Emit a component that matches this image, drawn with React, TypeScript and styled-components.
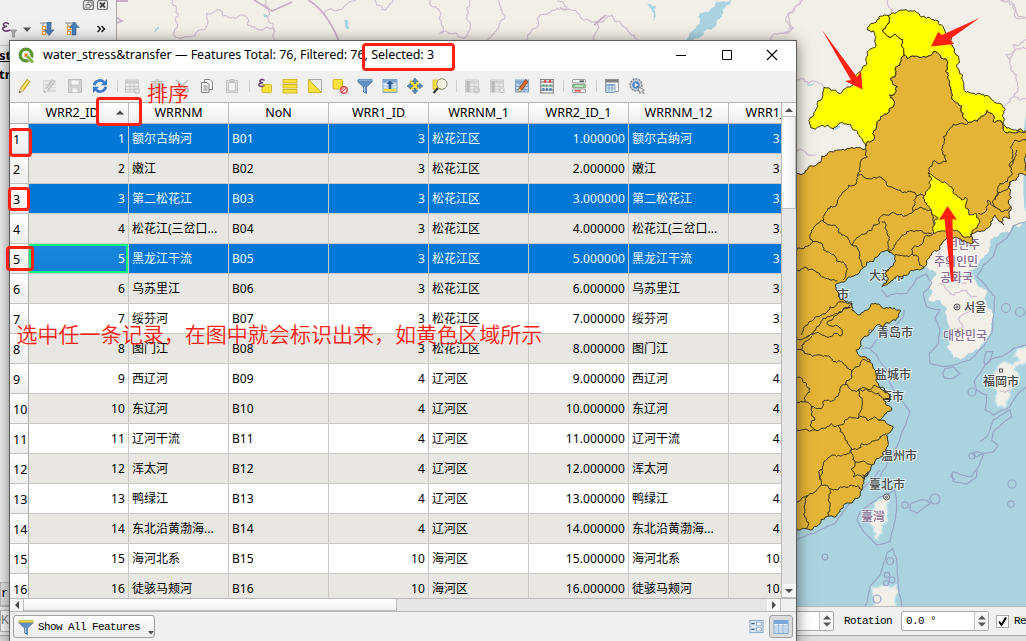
import React from "react";
import styled, { createGlobalStyle, css } from "styled-components";

const ui = `"Noto Sans", "Noto Sans CJK SC", sans-serif`;
const mono = `"Liberation Mono", monospace`;

const Global = createGlobalStyle`
  body { margin: 0; background: #f0f0f0; overflow: hidden; }
  * { box-sizing: border-box; }
`;

const Desktop = styled.div`
  position: relative;
  width: 1026px;
  height: 641px;
  overflow: hidden;
  display: flex;
  flex-direction: column;
  background: #f0f0f0;
  color: #000;
  font: 12px/16px ${ui};
`;

/* ---------- main window behind ---------- */

const MainRow = styled.div`
  display: flex;
  height: 606px;
  flex: none;
`;

const LayersPanel = styled.div`
  width: 117px;
  flex: none;
  display: flex;
  flex-direction: column;
  justify-content: space-between;
  border-right: 1px solid #a5a5a5;
`;

const PanelTools = styled.div`
  height: 46px;
  border-bottom: 1px solid #c9c9c9;
  svg { display: block; }
`;

const LayerName = styled.div<{ $active?: boolean }>`
  font: bold 13px/19px ${ui};
  margin-left: -1px;
  text-decoration: ${(p) => (p.$active ? "underline" : "none")};
`;

const PanelFoot = styled.div`
  height: 24px;
  border: 1px solid #bcbcbc;
  background: #e4e4e4;
  font: 12px/22px ${mono};
`;

const MainStatus = styled.div`
  height: 30px;
  flex: none;
  display: flex;
  align-items: center;
  justify-content: space-between;
  border-top: 1px solid #b8b8b8;
  border-bottom: 1px solid #a9a9a9;
  font: 11px/16px ${mono};
  letter-spacing: -0.6px;
`;

const StatusGroup = styled.div`
  display: flex;
  align-items: center;
`;

const Under = styled.div`
  flex: 1;
  background: #dedede;
`;

const Locator = styled.div`
  width: 100px;
  height: 22px;
  border: 1px solid #b5b5b5;
  background: #fff;
  color: #888;
  font: 13px/20px ${mono};
`;

const Spin = styled.div<{ $w: number }>`
  width: ${(p) => p.$w}px;
  height: 20px;
  display: flex;
  justify-content: space-between;
  border: 1px solid #a8a8a8;
  border-radius: 2px;
  background: #fff;
  padding-left: 4px;
  line-height: 18px;
`;

const SpinButtons = styled.div`
  width: 14px;
  border-left: 1px solid #c4c4c4;
  background: #f6f6f6;
  svg { display: block; margin: 3px auto; }
`;

const StatusLabel = styled.span<{ $w: number; $gap: number }>`
  padding-left: ${(p) => p.$gap}px;
  width: ${(p) => p.$w}px;
`;

const Check = styled.div`
  width: 13px;
  height: 13px;
  margin-left: 7px;
  border: 1px solid #a8a8a8;
  background: #fff;
  svg { display: block; }
`;

/* ---------- attribute table window ---------- */

const Win = styled.div`
  position: absolute;
  left: 9px;
  top: 40px;
  width: 788px;
  height: 605px;
  display: flex;
  flex-direction: column;
  background: #f0f0f0;
  border: 1px solid #5c5c5c;
  box-shadow: 0 2px 14px rgba(0, 0, 0, 0.5);
`;

const TitleBar = styled.div`
  height: 30px;
  flex: none;
  display: flex;
  align-items: center;
  background: #fff;
  padding: 0 1px 2px 8px;
`;

const Title = styled.div`
  flex: 1;
  padding-left: 8px;
  white-space: nowrap;
  font: 12.5px/18px ${ui};
  letter-spacing: -0.03px;
`;

const WinButton = styled.div`
  width: 45.5px;
  display: flex;
  justify-content: center;
`;

const Toolbar = styled.div`
  height: 31px;
  flex: none;
  display: flex;
  align-items: center;
  padding: 0 0 2px 2.6px;
`;

const Tool = styled.div<{ $dim?: boolean }>`
  width: 25px;
  display: flex;
  justify-content: center;
  opacity: ${(p) => (p.$dim ? 0.4 : 1)};
  filter: ${(p) => (p.$dim ? "grayscale(1)" : "none")};
  svg { display: block; }
`;

const Sep = styled.div`
  width: 7.3px;
  height: 12px;
  border-left: 1px solid #cfcfcf;
  margin-left: 4px;
  margin-right: -4px;
`;

const TableArea = styled.div`
  display: flex;
  height: 496px;
  flex: none;
  border-top: 1px solid #b4b4b4;
`;

const Grid = styled.div`
  width: 771px;
  overflow: hidden;
  background: #fff;
`;

const Row = styled.div`
  display: flex;
  width: 900px;
`;

const RowHead = styled.div`
  width: 19px;
  height: 30px;
  flex: none;
  padding: 1px 0 0 3px;
  line-height: 29px;
  font-size: 12.5px;
  background: linear-gradient(#fff, #ededed);
  border-right: 1px solid #adadad;
  border-bottom: 1px solid #c4c4c4;
`;

const ColHead = styled.div<{ $w: number; $sorted?: boolean }>`
  position: relative;
  width: ${(p) => p.$w}px;
  height: 21px;
  flex: none;
  padding-right: ${(p) => (p.$sorted ? 13 : 0)}px;
  text-align: center;
  font-size: 12.5px;
  line-height: 20px;
  background: linear-gradient(#fff, #ededed);
  border-right: 1px solid #bdbdbd;
  border-bottom: 1px solid #b4b4b4;
`;

const SortMark = styled.svg`
  position: absolute;
  right: 4px;
  top: 7px;
`;

const Cell = styled.div<{ $sel: boolean; $odd: boolean; $num: boolean; $cur: boolean }>`
  width: 100px;
  height: 30px;
  flex: none;
  padding: 0 3px;
  white-space: nowrap;
  overflow: hidden;
  line-height: 29px;
  letter-spacing: ${(p) => (p.$num ? "0.12px" : "0")};
  text-align: ${(p) => (p.$num ? "right" : "left")};
  border-right: 1px solid #c8c8c8;
  border-bottom: 1px solid #c8c8c8;
  background: ${(p) => (p.$sel ? "#0078d7" : p.$odd ? "#e9e7e3" : "#fff")};
  color: ${(p) => (p.$sel ? "#f2f8ff" : "#000")};
  ${(p) =>
    p.$cur &&
    css`
      background: linear-gradient(#1b86dd, #127fd6);
      box-shadow: inset 0 0 0 2px #06f57f;
    `}
`;

const VScroll = styled.div`
  width: 15px;
  display: flex;
  flex-direction: column;
  background: #e6e6e6;
  border-left: 1px solid #b8b8b8;
`;

const HScroll = styled.div`
  height: 14px;
  flex: none;
  display: flex;
  background: #e6e6e6;
  border-top: 1px solid #b8b8b8;
  border-bottom: 1px solid #b8b8b8;
`;

const ScrollButton = styled.div<{ $vertical?: boolean }>`
  width: 14px;
  height: ${(p) => (p.$vertical ? "14px" : "12px")};
  flex: none;
  display: flex;
  align-items: center;
  justify-content: center;
  background: #f7f7f7;
  border: solid #bdbdbd;
  border-width: ${(p) => (p.$vertical ? "0 0 1px" : "0 1px 0 0")};
`;

const Thumb = styled.div<{ $w: string; $h: string; $dir: string }>`
  width: ${(p) => p.$w};
  height: ${(p) => p.$h};
  background: linear-gradient(${(p) => p.$dir}, #fff, #efefef);
  border: solid #bdbdbd;
  border-width: 0 1px 1px 0;
`;

const Fill = styled.div`
  flex: 1;
`;

const Corner = styled.div`
  width: 15px;
  background: #f0f0f0;
`;

const Footer = styled.div`
  flex: none;
  height: 32px;
  display: flex;
  justify-content: space-between;
  padding: 3px 3px 0;
`;

const FilterButton = styled.div`
  width: 142px;
  height: 23px;
  display: flex;
  align-items: center;
  border: 1px solid #a0a0a0;
  border-radius: 3px;
  background: linear-gradient(#fff, #ececec);
  padding-left: 4px;
  gap: 4px;
  font: 11px/16px ${mono};
  letter-spacing: -0.6px;
  white-space: nowrap;
  svg { flex: none; }
  svg:last-child { margin: 12px 0 0 4px; }
`;

const Views = styled.div`
  display: flex;
  align-items: center;
  height: 23px;
  gap: 5px;
`;

const ActiveView = styled.div`
  width: 24px;
  height: 23px;
  display: flex;
  align-items: center;
  justify-content: center;
  border: 1px solid #a0a0a0;
  border-radius: 3px;
  background: #dcdcdc;
`;

/* ---------- annotations over the windows ---------- */

const Mark = styled.div<{ $x: number; $y: number; $w: number; $h: number }>`
  position: absolute;
  left: ${(p) => p.$x}px;
  top: ${(p) => p.$y}px;
  width: ${(p) => p.$w}px;
  height: ${(p) => p.$h}px;
  border: 3px solid #ff2010;
  border-radius: 4px;
`;

const Note = styled.div<{ $x: number; $y: number }>`
  position: absolute;
  left: ${(p) => p.$x}px;
  top: ${(p) => p.$y}px;
  color: #f8200f;
  font: 350 21px/28px "Noto Sans CJK SC", sans-serif;
  letter-spacing: 0.03px;
  white-space: nowrap;
`;

const Arrows = styled.svg`
  position: absolute;
  left: 0;
  top: 0;
`;

/* ---------- map ---------- */

type P = [number, number];

const sheet = (ox: number, oy: number, flat: string): P[] =>
  flat.split(" ").map((s) => {
    const [a, b] = s.split(",").map(Number);
    return [ox + a / 3, oy + b / 3] as P;
  });

/* Repeatable midpoint displacement: shared borders give the same line both ways. */
const split = (a: P, b: P, depth: number, k: number): P[] => {
  const dx = b[0] - a[0];
  const dy = b[1] - a[1];
  const len = Math.hypot(dx, dy);
  if (depth === 0 || len < 2.5) return [b];
  const sign = a[0] < b[0] || (a[0] === b[0] && a[1] < b[1]) ? 1 : -1;
  const h = Math.sin((a[0] + b[0]) * 12.9898 + (a[1] + b[1]) * 78.233) * 43758.5453;
  const r = (h - Math.floor(h) - 0.5) * k * sign * Math.min(1, 12 / len);
  const m: P = [(a[0] + b[0]) / 2 - dy * r, (a[1] + b[1]) / 2 + dx * r];
  return [...split(a, m, depth - 1, k), ...split(m, b, depth - 1, k)];
};

const trace = (pts: P[], close = false, k = 0.55) => {
  let out: P[] = [pts[0]];
  for (let i = 1; i < pts.length; i++) out = out.concat(split(pts[i - 1], pts[i], 4, k));
  return "M" + out.map((p) => p[0].toFixed(1) + " " + p[1].toFixed(1)).join("L") + (close ? "Z" : "");
};

const N = (s: string) => sheet(780, 0, s);
const M = (s: string) => sheet(780, 150, s);
const S = (s: string) => sheet(780, 310, s);
const B = (s: string) => sheet(780, 470, s);
const T = (s: string) => sheet(110, 0, s);
const U = (s: string) => sheet(560, 0, s);

const shared = "325,46 328,62 322,75 308,94 330,112 345,102 360,115 368,118 366,140 372,166";
const yellowWest = N(
  shared +
    " 362,178 360,195 345,205 348,215 345,230 332,235 340,255 352,260 348,275 328,285 340,320 310,345 290,375 283,410 262,425 258,438 245,415 225,390 200,372 175,372 160,388 145,376 105,388 88,370 102,345 132,262 175,280 215,258 240,215 262,155 288,135 288,110 280,92 262,90 275,70 300,48 325,46"
);
const yellowNorth = N(
  "325,46 345,40 390,33 415,40 440,55 470,62 490,80 498,100 512,125 525,160 530,195 548,225 552,262 575,280 600,280 630,292 645,308 668,320 672,340 668,350 680,385 700,390 745,386 745,394 700,398 675,396 668,370 640,365 640,345 620,330 605,348 600,355 580,362 565,368 550,340 545,318 520,300 518,285 508,255 502,200 504,185 480,165 460,155 440,170 410,168 385,175 " +
    shared.split(" ").reverse().join(" ")
);
const yellowSouth = M(
  "445,70 455,75 500,100 515,110 520,130 545,150 555,142 562,150 558,175 568,195 590,192 598,210 590,235 570,262 545,255 530,240 505,235 480,245 460,250 458,230 475,205 455,185 440,160 437,130 448,100 445,70"
);

const basinArea: P[] = [
  ...N("258,438 262,425 283,410 290,375 310,345 340,320 328,285 348,275 352,260 340,255 332,235 345,230 348,215 345,205 360,195 362,178 372,166 385,175 410,168 440,170 460,155 480,165 504,185 502,200 508,255 518,285 520,300 545,318 550,340 565,368 580,362 600,355 605,348 620,330 640,345 640,365 668,370 675,396 700,398 745,394"),
  ...M("745,75 715,72 690,95 690,130 694,175 690,205 668,205 672,225 655,210 645,195 632,225 600,245 575,250 580,278 545,275 530,262 495,270 480,298 455,315 430,355 400,362 360,380 320,405 305,410 325,385 315,370 340,345 345,320 335,308 310,305 280,335 250,352 225,375 195,395 172,400 168,420 175,440 200,460 215,460 215,480 240,495 262,480 290,462 310,475 330,472 362,482"),
  ...S("358,8 355,22 315,40 290,45 270,65 245,88 228,120 270,150 280,175 290,200 300,235 325,250 332,268 310,268 335,300 310,320 295,330 318,338 340,350 320,375 325,400 310,425 290,445 275,465 265,490 250,505"),
  ...B("265,5 248,15 252,40 245,60 225,85 190,105 175,130 140,140 115,165 75,175 20,185"),
  ...M("20,70 50,70 75,68 110,45 125,25"),
  ...N("125,468 150,455 190,448 225,445 258,448 258,438"),
];

const borders: P[][] = [
  M("258,0 262,20 240,50 232,75 280,82 310,88 380,128 410,138 437,135"),
  M("232,75 225,105 195,122 172,150 130,212 95,240 98,275 75,290 40,302"),
  M("130,212 160,225 185,255 205,268 215,285 235,300 245,340 250,352"),
  M("215,285 235,262 260,250 280,225 300,218 310,192 345,190 395,190 405,165 408,138"),
  M("305,215 320,240 328,270 330,305"),
  M("328,300 355,270 380,245 425,242 455,250"),
  M("400,185 420,172 440,180 460,205 462,225"),
  M("345,315 375,318 395,312 415,330 430,355"),
  M("395,312 430,275 460,250"),
  M("98,275 125,280 150,310 198,345 190,390"),
  M("40,360 75,350 100,360 120,375 150,390 172,392"),
  M("215,455 180,455 150,470 110,500 85,520 65,555"),
  M("218,462 160,495 110,530 80,565"),
  M("500,35 465,32 450,50 445,70"),
  N("565,370 520,372 490,410 485,450 500,485"),
  N("745,418 705,420 692,440 700,480 692,500"),
  M("710,0 705,20 690,40 695,75 660,100 655,130 645,145 650,175 625,150 620,180 595,190"),
  M("690,95 665,125 645,150"),
  M("650,175 675,180 692,170"),
  S("40,85 80,80 110,68 180,78 182,55 140,40 160,25 215,-10"),
  S("40,120 65,120 110,135 160,155 215,182 272,152"),
  S("65,120 75,95 95,78"),
  S("40,190 90,235 75,275 100,290 125,295 145,270 195,225 215,182"),
  S("195,222 235,240 250,232 300,232 318,248"),
  S("235,240 280,248 330,265"),
  S("235,240 245,290 235,325 265,332 295,330"),
  S("235,325 180,345 130,355 105,360 40,372"),
  S("100,290 105,330 90,345 105,360"),
  S("175,345 180,365 195,385 210,425 155,435 130,465 120,510"),
  S("210,425 245,400 300,380 318,370"),
  S("210,425 225,455 275,465"),
  S("225,455 220,500 250,505"),
  S("40,275 75,275"),
  B("125,0 125,45 160,60 190,50 245,58"),
  B("125,45 85,75 40,100"),
  B("80,75 75,120 80,175"),
  B("150,58 145,140"),
];

const seaEdge: P[] = [
  ...M("745,212 700,225 680,245 640,262 630,290 600,330 575,360 560,385 590,400 620,430 635,480 635,510"),
  ...S("635,50 620,90 600,115 560,135 520,145 500,110 508,70 500,30"),
  ...M("495,490 480,450 445,450 455,420 450,395 470,370 430,350 450,300 340,280 250,300 160,380 60,480"),
];
const land: P[] = [[110, -5], [1032, -5], ...seaEdge, [790, 520], [110, 520]];
const kyushu = S("745,105 700,140 720,150 700,165 660,160 640,195 625,215 645,240 655,290 675,295 690,260 715,220 700,180 745,150");
const taiwan = B("322,75 328,95 322,130 305,165 295,210 285,205 272,160 280,125 300,90");
const luzon = B("275,350 300,348 330,355 350,345 355,370 345,385 352,420 272,420 280,385");

const maritime: P[][] = [
  M("738,215 700,228 680,265 650,285 640,320 610,345 590,380 620,410 645,440 640,500"),
  S("640,20 635,70 610,110 570,150 520,165 490,170 450,160 448,130 475,100 480,60 465,20"),
  M("465,510 480,480 440,470 430,430 455,400 440,372 410,385 380,430 350,430 320,440 305,420"),
  S("245,115 270,115 300,80 345,50 370,20 372,0"),
  S("270,115 320,180 330,220 390,305 350,410 300,500 290,510"),
  B("300,0 280,30 215,90 165,160 100,190 40,215"),
  S("745,100 700,115 665,140 630,150 600,190 582,215 590,240 620,255 615,300 640,315 690,290 715,250 745,225"),
  B("345,60 350,110 330,215 290,225 255,190 230,150 240,125 300,80 345,60"),
  B("255,410 270,350 300,315 320,250 338,235 348,260 355,350 368,412"),
  S("495,175 520,170 540,190 520,205 495,205 488,190 495,175"),
  S("612,150 620,125 638,125 630,155 615,165 612,150"),
  S("600,395 620,380 640,330 690,300 695,320 640,365 635,390 655,405 640,425 610,430 600,460 575,500 545,495 520,485 512,500 525,510"),
  S("610,430 590,440 575,430 590,425 610,430"),
  B("515,10 520,35 560,42 590,20 592,0"),
  B("392,100 420,90 440,90 450,100 430,115 410,130 390,120 392,100"),
];

const frontier: P[][] = [
  T("185,-5 195,60 190,100 210,115 255,108 280,90 290,40 330,30 350,48 400,45 412,72 470,82 495,95 495,125"),
  T("465,-5 475,30 488,70 495,95"),
  T("645,50 650,30 700,22 740,-5"),
  T("785,-5 800,15 825,30 850,0"),
  T("955,-5 990,35 1000,80 990,100 1040,100 1060,115 1080,80 1070,45 1080,0"),
  T("1165,-5 1185,45 1165,85 1120,125"),
  T("1245,125 1290,45 1360,30 1370,20 1340,-5"),
  U("0,20 60,45 115,65 155,45 200,85 250,122"),
  U("115,65 100,110 105,122"),
  U("610,125 660,100 700,85 685,40 720,0"),
  U("985,-5 1000,30 995,45"),
  U("1320,0 1360,10 1375,50 1400,55"),
  U("1400,145 1360,155 1350,180"),
  N("0,100 35,90 25,40 70,0"),
  N("45,238 85,250 120,252 132,262"),
  N("660,0 700,15 705,50 745,55"),
  N("745,120 700,135 705,150 678,165 690,190 710,225 700,290 672,320"),
  N("700,290 745,295"),
  M("45,0 75,5 110,15"),
  M("460,290 500,330 530,370 500,400 560,400"),
  M("480,400 510,430 560,420 590,440"),
  S("520,60 550,50 540,20 580,0"),
  S("660,240 690,240 690,200"),
];

const lakes = [
  U("365,122 400,90 420,70 415,50 450,30 470,0 515,0 490,40 470,75 430,95 395,122"),
  T("460,40 472,45 475,58 462,52"),
  T("703,60 715,62 722,90 705,75"),
  T("132,95 145,78 147,85 136,97"),
  N("80,250 105,245 100,255 82,256"),
  N("165,378 180,376 172,388 162,388"),
  U("260,10 290,20 282,30 280,62 276,30"),
];

const islands: [number, number, number][] = [
  [1006, 308, 4.5], [1020, 312, 4.5], [1012, 484, 4], [1011, 504, 3.2], [825, 557, 2.8], [905, 505, 3.2],
  [972, 456, 3], [972, 392, 4], [890, 561, 3.5], [887, 575, 2.7], [892, 580, 3], [886, 583, 2.5], [935, 499, 5], [877, 599, 4],
];

const CityText = styled.text<{ $country?: boolean }>`
  font: 500 12px "Noto Sans CJK SC", "Noto Sans CJK KR", sans-serif;
  fill: ${(p) => (p.$country ? "#8b6a92" : "#484848")};
  stroke: rgba(255, 255, 255, 0.6);
  stroke-width: 2px;
  paint-order: stroke;
`;

const cities: [string, number, number, boolean?][] = [
  ["大连市", 869, 280], ["市", 837, 299], ["青岛市", 877, 337], ["盐城市", 875, 379], ["上海市", 868, 401],
  ["温州市", 881, 460], ["臺北市", 869, 489], ["서울", 964, 312], ["福岡市", 983, 386],
  ["臺灣", 861, 521, true], ["대한민국", 943, 340, true], ["선민주", 947, 249, true],
  ["주의인민", 934, 266, true], ["공화국", 940, 282, true],
];

const MapCanvas = () => (
  <svg width="909" height="606" viewBox="117 0 909 606">
    <rect x="117" width="909" height="606" fill="#abd3df" />
    <g fill="#f2efe8">
      <path d={trace(land, true)} />
      {[kyushu, taiwan, luzon].map((p, i) => <path key={i} d={trace(p, true)} stroke="#c9e4e8" strokeWidth="1.5" />)}
    </g>
    <g fill="#abd3df">{lakes.map((p, i) => <path key={i} d={trace(p, true)} />)}</g>
    <g fill="none" stroke="#d3c1d3" strokeWidth="1.2">
      {frontier.map((p, i) => <path key={i} d={trace(p)} />)}
      <path d="M308 0Q326 10 339 41M254 0L267 8L272 11L292 2M117 1L128 1M117 18L122 21L117 23M594 25L600 20L606 15" strokeWidth="1.8" stroke="#c7aec6" />
    </g>
    <g fill="none" stroke="#98a3c6" strokeWidth="1.2">
      {maritime.map((p, i) => <path key={i} d={trace(p, false, 0.12)} />)}
      {islands.map(([x, y, r], i) => <circle key={i} cx={x} cy={y} r={r} />)}
    </g>
    {cities.map(([t, x, y, c]) => <CityText key={t + y} x={x} y={y} $country={c}>{t}</CityText>)}
    <g fill="#eee" stroke="#555" strokeWidth="1">
      <circle cx="957" cy="307" r="3" /><circle cx="957" cy="307" r="1" />
      <circle cx="886.500" cy="497" r="3" /><circle cx="886.500" cy="497" r="1" />
      <rect x="999.500" y="369" width="3" height="3" />
    </g>
    <g stroke="#33301c" strokeWidth="1" strokeLinejoin="round">
      <path d={trace(basinArea, true)} fill="#e4b436" />
      <g fill="none">{borders.map((p, i) => <path key={i} d={trace(p)} />)}</g>
      <g fill="#ff0">{[yellowWest, yellowNorth, yellowSouth].map((p, i) => <path key={i} d={trace(p, true)} />)}</g>
    </g>
    <rect x="869" y="330" width="2.500" height="2.500" fill="#fff" stroke="#555" strokeWidth=".8" />
  </svg>
);

/* ---------- icons ---------- */

const Tri = ({ d }: { d: "up" | "down" | "left" | "right" }) => (
  <svg width="8" height="8" viewBox="0 0 8 8">
    <path fill="#4a4a4a" d={{ up: "M0 6L4 2L8 6Z", down: "M0 2L4 6L8 2Z", left: "M6 0L2 4L6 8Z", right: "M2 0L6 4L2 8Z" }[d]} />
  </svg>
);

const Pencil = ({ c = "#f3d32b" }: { c?: string }) => (
  <g><path d="M2 15L3.500 10.500L10 1.500L13 3.500L6.500 12.500Z" fill={c} stroke="#96761a" strokeWidth=".7" /><path d="M2 15L3.500 10.500L6.500 12.500Z" fill="#ead9b0" /><path d="M2 15L2.700 13L4 14Z" fill="#333" /><path d="M5 11.500L11.500 2.500" stroke="#fff" strokeOpacity=".6" /></g>
);
const Funnel = () => (
  <g><path d="M1 2H15V4L9.500 9V15.500L6.500 14V9L1 4Z" fill="#5f8fc4" stroke="#3e6a9c" strokeWidth=".7" /><path d="M1 1.300H15V3.500H1Z" fill="#f3dc3c" stroke="#b5a020" strokeWidth=".4" /><path d="M7.500 9V14" stroke="#bcd5ee" /></g>
);
const BlueFunnel = () => (
  <g><path d="M1 2H15V4L9.500 9V15.500L6.500 14V9L1 4Z" fill="#5f8fc4" stroke="#3e6a9c" strokeWidth=".7" /><path d="M1 1.300H15V3.500H1Z" fill="#86aad2" stroke="#3e6a9c" strokeWidth=".4" /><path d="M7.500 9V14" stroke="#bcd5ee" /></g>
);
const TableBox = ({ fill = "#dfeaf6", stroke = "#6d93bd" }: { fill?: string; stroke?: string }) => (
  <g><rect x="1.500" y="2" width="13" height="12" fill={fill} stroke={stroke} strokeWidth=".8" /><path d="M2 3H14V5.500H2Z" fill={stroke} opacity=".65" /><path d="M2 8.500H14M2 11.500H14M6 5V14M10 5V14" stroke={stroke} strokeWidth=".7" /></g>
);

const glyphs: Record<string, React.ReactNode> = {
  edit: <Pencil />,
  multi: <g><path d="M1 2H14V14H1Z" fill="#bbb" /><path d="M2 5H14M2 8H14M2 11H14" stroke="#fff" /><Pencil c="#888" /></g>,
  save: <g><path d="M1.500 1.500H14.500V14.500H1.500Z" fill="#aaa" stroke="#777" /><path d="M4 2H12V7H4ZM5 10H11V14.500H5Z" fill="#f5f5f5" stroke="#777" strokeWidth=".6" /></g>,
  reload: <g fill="none" stroke="#3a7cc6" strokeWidth="2.800"><path d="M2.300 7.200A5.700 5.700 0 0 1 12 4.200" /><path d="M13.700 8.800A5.700 5.700 0 0 1 4 11.800" /><path d="M15 1V7.200H8.800ZM1 15V8.800H7.200Z" fill="#3a7cc6" stroke="none" /></g>,
  add: <g><TableBox stroke="#777" fill="#ddd" /><circle cx="13" cy="13" r="3" fill="#888" /><path d="M13 11V15M11 13H15" stroke="#fff" /></g>,
  del: <g fill="#b7b7b7" stroke="#777"><path d="M3 5H13L12 15H4Z" /><path d="M2 3.500H14M6 2H10M6 7V13M8 7V13M10 7V13" /></g>,
  cut: <g stroke="#666" strokeWidth="1.300" fill="none"><path d="M2 2L12 11M14 2L5 11" /><circle cx="3.500" cy="12.500" r="2" /><circle cx="12.500" cy="12.500" r="2" /></g>,
  copy: <g fill="#f4f4f4" stroke="#777" strokeWidth=".9"><path d="M5.500 1.500H11L13.500 4V11.500H5.500Z" /><path d="M2.500 4.500H8L10 6.500V14.500H2.500Z" /><path d="M4.500 8H8.500M4.500 10H8.500M4.500 12H8.500" /></g>,
  paste: <g fill="#f4f4f4" stroke="#777"><path d="M2.500 2.500H13.500V14.500H2.500Z" fill="#ccc" /><path d="M4.500 4.500H11.500V13H4.500Z" /><path d="M6 1.500H10V3.500H6Z" fill="#aaa" /></g>,
  expr: <g><rect x="5" y="6.500" width="9.500" height="8" rx="1" fill="#fae13c" stroke="#c7aa1c" strokeWidth=".8" /><path d="M7.500 2.500Q4.500 .5 3 2.500Q2.300 4.500 6 4.800Q1 5 2 7.500Q4 9.500 7.500 7.500" fill="none" stroke="#633a6b" strokeWidth="1.400" /></g>,
  all: <g fill="#fae13c" stroke="#c7aa1c" strokeWidth=".8"><rect x="1" y="1.500" width="14" height="3.500" /><rect x="1" y="6.500" width="14" height="3.500" /><rect x="1" y="11.500" width="14" height="3.500" /></g>,
  invert: <g strokeWidth=".8"><path d="M1.500 1.500H14.500V14.500Z" fill="#eee" stroke="#999" /><path d="M1.500 1.500V14.500H14.500Z" fill="#fae13c" stroke="#c7aa1c" /></g>,
  none: <g><rect x="1" y="1.500" width="9.500" height="9.500" rx="1" fill="#fae13c" stroke="#c7aa1c" strokeWidth=".8" /><circle cx="12" cy="12" r="3.300" fill="#fde8e8" stroke="#d4383c" strokeWidth="1.200" /><path d="M10 14L14 10M9.700 12L12 9.700" stroke="#d4383c" /></g>,
  filter: <BlueFunnel />,
  filterAll: <Funnel />,
  top: <g><rect x="1" y="1.500" width="14" height="13" fill="#b9d0e8" stroke="#6d93bd" strokeWidth=".8" /><path d="M1 2H15V4.500H1Z" fill="#7fa4cd" /><path d="M1.500 11H14.500V13.500H1.500Z" fill="#f3dc3c" /><path d="M1.500 6.500H5M11 6.500H14.500M1.500 9H5M11 9H14.500" stroke="#fff" strokeWidth=".8" /><path d="M8 2.500L11.500 6H9.300V11H6.700V6H4.500Z" fill="#2c5c8f" /></g>,
  pan: <g><rect x="3" y="3" width="8" height="8" fill="#fae13c" stroke="#c7aa1c" strokeWidth=".7" /><path d="M8 0L10.800 3.500H9V5.500H7V3.500H5.200ZM8 16L10.800 12.500H9V10.500H7V12.500H5.200ZM0 8L3.500 5.200V7H5.500V9H3.500V10.800ZM16 8L12.500 5.200V7H10.500V9H12.500V10.800Z" fill="#5d8abb" stroke="#2f5d8f" strokeWidth=".5" /></g>,
  zoom: <g><rect x="1" y="2" width="9" height="9" fill="#fae13c" stroke="#c7aa1c" strokeWidth=".7" /><path d="M6 10L1.500 15" stroke="#333" strokeWidth="2" /><circle cx="10" cy="6" r="5.200" fill="#f1f0e0" fillOpacity=".95" stroke="#8d8d80" strokeWidth="1" /></g>,
  newField: <g><TableBox stroke="#888" fill="#ddd" /><path d="M4 3V14" stroke="#666" strokeWidth="3" /><circle cx="12.500" cy="12" r="3.500" fill="#999" /><circle cx="12.500" cy="12" r="1" fill="#fff" /></g>,
  delField: <g><TableBox stroke="#888" fill="#ddd" /><path d="M4 3V14" stroke="#666" strokeWidth="3" /><rect x="10" y="9.500" width="5.500" height="5.500" fill="#b88" /><path d="M11 10.500L14.500 14M14.500 10.500L11 14" stroke="#fff" /></g>,
  organize: <g><TableBox fill="#b8d0ea" /><path d="M4 14L5 10.500L11.500 1.500L14 3.500L7.500 12.500Z" fill="#e06c2b" stroke="#7c3c14" strokeWidth=".7" /><path d="M4 14L5 10.500L7.500 12.500Z" fill="#eed9b0" /></g>,
  calc: <g><path d="M1.800 1V15M14.200 1V15M1 4H15M1 8H15M1 12H15M1 15H15M1 1.500H15" stroke="#777" strokeWidth=".9" /><g fill="#d4494b"><circle cx="6" cy="3.500" r="1.400" /><circle cx="11" cy="3.500" r="1.400" /></g><g fill="#67a37e"><circle cx="4.500" cy="7.500" r="1.300" /><circle cx="7.500" cy="7.500" r="1.300" /><circle cx="11.500" cy="7.500" r="1.300" /></g><g fill="#4e82ad"><circle cx="4.500" cy="11.500" r="1.400" /><circle cx="8" cy="11.500" r="1.400" /><circle cx="11.500" cy="11.500" r="1.400" /></g></g>,
  cond: <g strokeWidth=".8" stroke="#888"><rect x="1.500" y="1.500" width="13" height="3.400" rx=".8" fill="#fff" /><rect x="1.500" y="6.300" width="13" height="3.400" rx=".8" fill="#7fcf84" /><rect x="1.500" y="11.100" width="13" height="3.400" rx=".8" fill="#fff" /><path d="M8.500 3.200H13" stroke="#333" strokeWidth="1.300" /><path d="M4 8H12" stroke="#eefbe9" strokeWidth="1" /><path d="M3.500 12.800H10" stroke="#d33" strokeWidth="1.300" /></g>,
  dock: <g strokeWidth=".8"><rect x="1.500" y="1.500" width="13" height="12" fill="#f5f5f5" stroke="#8c8c8c" /><path d="M1.500 1.500H14.500V4.500H1.500Z" fill="#808080" /><rect x="2" y="6.500" width="9" height="8" fill="#dbe8f6" stroke="#7298c1" /><path d="M2.500 7.500H10.500M2.500 10H10.500M5 8V14M8 8V14" stroke="#7298c1" /></g>,
  action: <g><circle cx="7" cy="7" r="6" fill="#b5bcc4" stroke="#858d95" strokeDasharray="2 1" strokeWidth="1.400" /><circle cx="7" cy="7" r="4.200" fill="#4f82bd" stroke="#dfe8f1" strokeWidth=".9" /><path d="M5.800 4.800L9.300 7L5.800 9.200Z" fill="#fff" /><path d="M9 9L15.500 12L13 12.700L15.500 15.300L14.500 16L12.300 13.500L11 15.500Z" fill="#fff" stroke="#666" strokeWidth=".7" /></g>,
  form: <g><rect x="1" y="1.500" width="14" height="13" fill="#d9e6f3" stroke="#86a5c6" /><path d="M2.500 5H6M2.500 11H6" stroke="#415a75" strokeWidth="1.300" /><g fill="#fff" stroke="#86a5c6" strokeWidth=".9"><rect x="8" y="3.300" width="5" height="3.400" /><rect x="8" y="9.300" width="5" height="3.400" /></g></g>,
  table: <g><rect x="1" y="1.500" width="14" height="13" fill="#edf4fc" stroke="#7ba3cf" /><path d="M1 2H15V5H1Z" fill="#7aa6d8" /><path d="M2 7H14M2 9H14M2 11H14M2 13H14M5.500 5V14M10 5V14" stroke="#8fb1d5" strokeWidth=".8" /></g>,
};

const Glyph = ({ name, size = 16 }: { name: string; size?: number }) => (
  <svg width={size} height={size} viewBox="0 0 16 16">{glyphs[name]}</svg>
);

const QLogo = () => (
  <svg width="17" height="17" viewBox="0 0 17 17">
    <circle cx="8" cy="8" r="5.900" fill="none" stroke="#589632" strokeWidth="3.200" />
    <path d="M8.500 8.500L15.500 15.500" stroke="#fff" strokeWidth="4.500" />
    <path d="M9 9L15 15.500" stroke="#7fb53c" strokeWidth="3" />
    <path d="M6.500 6.500H10L8.800 9.500L6.500 10Z" fill="#ee7913" />
  </svg>
);

const PanelIcons = () => (
  <svg width="116" height="45" viewBox="0 0 116 45">
    <g fill="none" stroke="#777" strokeWidth="1.200">
      <rect x="83.500" y="0.500" width="10" height="9" rx="2" /><rect x="97.500" y="0.500" width="10" height="9" rx="2" />
      <path d="M86 4.500H90V8H86ZM88 4V2H92V6H90" strokeWidth="1" /><path d="M100 2.500L105 7.500M105 2.500L100 7.500" stroke="#444" strokeWidth="1.800" />
    </g>
    <path d="M9 24Q5 21.500 3.500 24Q3 26.300 7 26.500Q2 27 3 29.500Q5 32.500 10 30" fill="none" stroke="#68446f" strokeWidth="1.700" />
    <path d="M10 30H17L14.500 33V37H12.500V33Z" fill="#aaa" stroke="#888" strokeWidth=".6" />
    <path d="M23 27.500H31L27 32Z" fill="#555" />
    {[40, 65].map((x, i) => (
      <g key={x}>
        <path d={`M${x} 23H${x + 12}M${x + 3} 23V34H${x + 5}M${x + 3} 28H${x + 5}`} stroke="#888" fill="none" />
        <path d={`M${x + 2.5} 26.500H${x + 5.5}V29.500H${x + 2.5}ZM${x + 2.5} 31.500H${x + 5.5}V34.500H${x + 2.5}Z`} fill="#fff" stroke="#ef9b3b" strokeWidth="1.200" />
        <path d={i ? `M${x + 9} 22L${x + 14} 27.500H${x + 11}V35H${x + 7}V27.500H${x + 4.5}Z` : `M${x + 9} 35.500L${x + 14} 30H${x + 11}V22.500H${x + 7}V30H${x + 4.5}Z`} fill="#4d7fb7" stroke="#315f91" strokeWidth=".6" />
      </g>
    ))}
    <path d="M97.500 26L100.500 29L97.500 32M101.500 26L104.500 29L101.500 32" fill="none" stroke="#111" strokeWidth="1.400" />
  </svg>
);

/* ---------- data ---------- */

/* A leading dash marks a disabled action. */
const toolGroups: string[][] = [
  ["edit", "-multi", "-save", "reload"],
  ["-add", "-del", "-cut", "copy", "-paste"],
  ["expr", "all", "invert", "none", "filter", "top", "pan", "zoom"],
  ["-newField", "-delField", "organize", "calc"],
  ["cond"],
  ["dock", "action"],
];

const columns = ["WRR2_ID", "WRRNM", "NoN", "WRR1_ID", "WRRNM_1", "WRR2_ID_1", "WRRNM_12", "WRR1_ID_1"];
const names = [
  "额尔古纳河", "嫩江", "第二松花江", "松花江(三岔口...", "黑龙江干流", "乌苏里江", "绥芬河", "图门江",
  "西辽河", "东辽河", "辽河干流", "浑太河", "鸭绿江", "东北沿黄渤海...", "海河北系", "徒骇马颊河",
];
const region = (i: number): [number, string] => (i < 8 ? [3, "松花江区"] : i < 14 ? [4, "辽河区"] : [10, "海河区"]);
const selected = [0, 2, 4];

const Table = () => (
  <Grid>
    <Row>
      <ColHead $w={19} />
      {columns.map((c, i) => (
        <ColHead key={c} $w={100} $sorted={i === 0}>
          {c}
          {i === 0 && <SortMark width="8" height="5" viewBox="0 0 8 5"><path d="M0 4.500L4 .5L8 4.500Z" fill="#444" /></SortMark>}
        </ColHead>
      ))}
    </Row>
    {names.map((name, i) => {
      const [id, area] = region(i);
      const cells = [`${i + 1}`, name, "B" + String(i + 1).padStart(2, "0"), `${id}`, area, (i + 1).toFixed(6), name, id.toFixed(6)];
      return (
        <Row key={i}>
          <RowHead>{i + 1}</RowHead>
          {cells.map((v, c) => (
            <Cell key={c} $sel={selected.includes(i)} $odd={i % 2 === 1} $num={[0, 3, 5, 7].includes(c)} $cur={i === 4 && c === 0}>{v}</Cell>
          ))}
        </Row>
      );
    })}
  </Grid>
);

const SpinArrows = () => (
  <SpinButtons>
    <svg width="8" height="12" viewBox="0 0 8 12"><path d="M0 4.500L4 .5L8 4.500ZM0 7.500L4 11.500L8 7.500Z" fill="#555" /></svg>
  </SpinButtons>
);

export default function App() {
  return (
    <Desktop>
      <Global />
      <MainRow>
        <LayersPanel>
          <div>
            <PanelTools><PanelIcons /></PanelTools>
            <LayerName $active>st</LayerName>
            <LayerName>tr</LayerName>
          </div>
          <PanelFoot>r</PanelFoot>
        </LayersPanel>
        <MapCanvas />
      </MainRow>
      <MainStatus>
        <Locator>K)</Locator>
        <StatusGroup>
          <Spin $w={100}><span /><SpinArrows /></Spin>
          <StatusLabel $w={67} $gap={10}>Rotation</StatusLabel>
          <Spin $w={88}><span>0.0 °</span><SpinArrows /></Spin>
          <Check><svg width="11" height="11" viewBox="0 0 11 11"><path d="M2 5.500L4.500 9L9 1.500" fill="none" stroke="#000" strokeWidth="2" /></svg></Check>
          <StatusLabel $w={17} $gap={5}>Re</StatusLabel>
        </StatusGroup>
      </MainStatus>
      <Under />

      <Win>
        <TitleBar>
          <QLogo />
          <Title>water_stress&amp;transfer — Features Total: 76, Filtered: 76, Selected: 3</Title>
          <WinButton><svg width="12" height="12"><path d="M1 6.500H11" stroke="#000" /></svg></WinButton>
          <WinButton><svg width="12" height="12"><path d="M1.500 1.500H10.500V10.500H1.500Z" fill="none" stroke="#000" /></svg></WinButton>
          <WinButton><svg width="12" height="12"><path d="M1 1L11 11M11 1L1 11" stroke="#000" strokeWidth="1.100" /></svg></WinButton>
        </TitleBar>
        <Toolbar>
          {toolGroups.map((g, i) => (
            <React.Fragment key={i}>
              {i > 0 && <Sep />}
              {g.map((n) => <Tool key={n} $dim={n[0] === "-"}><Glyph name={n.replace("-", "")} /></Tool>)}
            </React.Fragment>
          ))}
        </Toolbar>
        <TableArea>
          <Table />
          <VScroll>
            <ScrollButton $vertical><Tri d="up" /></ScrollButton>
            <Thumb $w="14px" $h="92px" $dir="90deg" />
            <Fill />
            <ScrollButton $vertical><Tri d="down" /></ScrollButton>
          </VScroll>
        </TableArea>
        <HScroll>
          <ScrollButton><Tri d="left" /></ScrollButton>
          <Thumb $w="373px" $h="12px" $dir="180deg" />
          <Fill />
          <ScrollButton><Tri d="right" /></ScrollButton>
          <Corner />
        </HScroll>
        <Footer>
          <FilterButton>
            <Glyph name="filterAll" size={16} />
            <span>Show All Features</span>
            <svg width="6" height="4"><path d="M0 0H6L3 3.500Z" fill="#555" /></svg>
          </FilterButton>
          <Views>
            <Glyph name="form" size={15} />
            <ActiveView><Glyph name="table" size={16} /></ActiveView>
          </Views>
        </Footer>
      </Win>

      <Mark $x={362} $y={43} $w={93} $h={28} />
      <Mark $x={96} $y={97} $w={46} $h={29} />
      <Mark $x={9} $y={128} $w={23} $h={29} />
      <Mark $x={8} $y={187} $w={22} $h={24} />
      <Mark $x={6} $y={246} $w={28} $h={25} />
      <Note $x={147} $y={78}>排序</Note>
      <Note $x={16.5} $y={319}>选中任一条记录，在图中就会标识出来，如黄色区域所示</Note>
      <Arrows width="1026" height="641">
        <g fill="#ff2012">
          <path d="M822 30L857 77L861 71L862.500 89.500L845 81L851 80Z" />
          <path d="M979.500 18L950 39L954 44L931 46.500L938 32L942 35Z" />
          <path d="M947.500 206L957 220L952.500 219L953.500 282L951 281L944.500 219L939 220Z" />
        </g>
      </Arrows>
    </Desktop>
  );
}
